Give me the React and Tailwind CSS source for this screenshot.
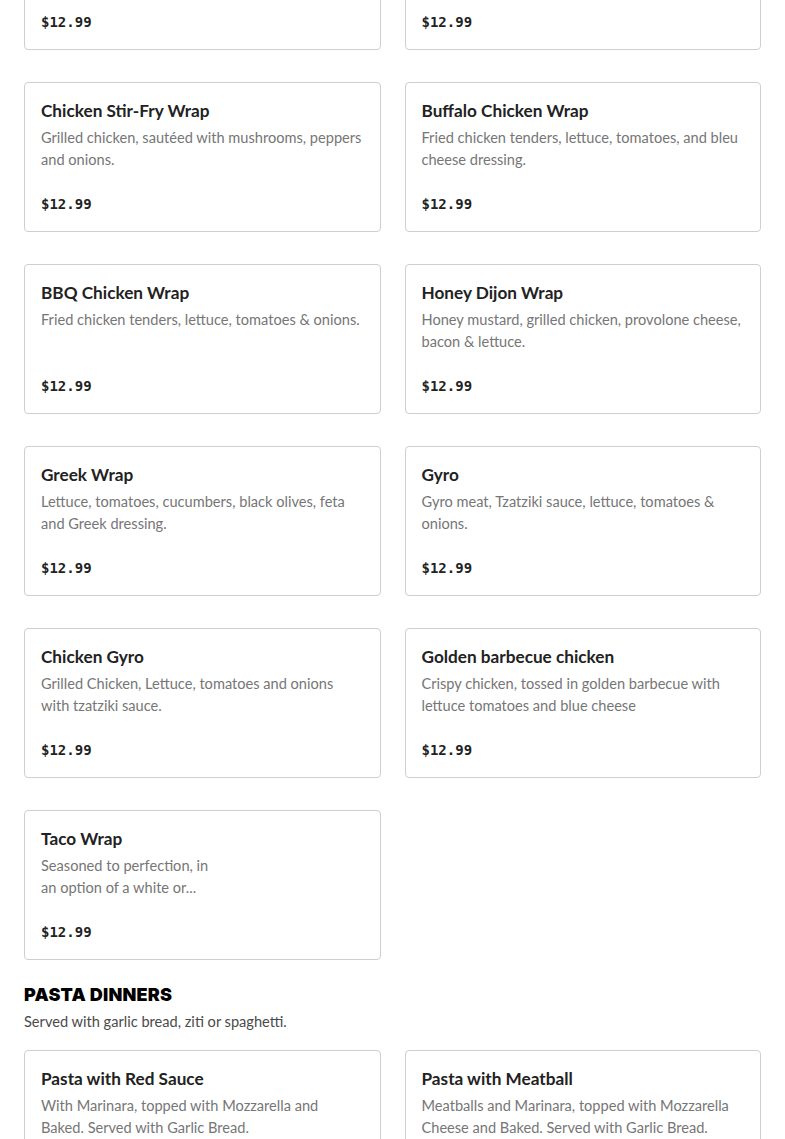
import React from "react";

const wraps = [
  { t: "Chicken Caesar Wrap", d: "Grilled chicken, romaine lettuce, parmesan cheese and Caesar dressing." },
  { t: "Chicken Bacon Ranch Wrap", d: "Grilled chicken, bacon, lettuce, tomatoes and ranch dressing." },
  { t: "Chicken Stir-Fry Wrap", d: "Grilled chicken, sautéed with mushrooms, peppers and onions." },
  { t: "Buffalo Chicken Wrap", d: "Fried chicken tenders, lettuce, tomatoes, and bleu cheese dressing." },
  { t: "BBQ Chicken Wrap", d: "Fried chicken tenders, lettuce, tomatoes & onions." },
  { t: "Honey Dijon Wrap", d: "Honey mustard, grilled chicken, provolone cheese, bacon & lettuce." },
  { t: "Greek Wrap", d: "Lettuce, tomatoes, cucumbers, black olives, feta and Greek dressing." },
  { t: "Gyro", d: "Gyro meat, Tzatziki sauce, lettuce, tomatoes & onions." },
  { t: "Chicken Gyro", d: "Grilled Chicken, Lettuce, tomatoes and onions with tzatziki sauce." },
  { t: "Golden barbecue chicken", d: "Crispy chicken, tossed in golden barbecue with lettuce tomatoes and blue cheese" },
  { t: "Taco Wrap", d: "Seasoned to perfection, in\nan option of a white or..." },
];

const pasta = [
  { t: "Pasta with Red Sauce", d: "With Marinara, topped with Mozzarella and Baked. Served with Garlic Bread." },
  { t: "Pasta with Meatball", d: "Meatballs and Marinara, topped with Mozzarella Cheese and Baked. Served with Garlic Bread." },
];

const sans = { fontFamily: "Lato, 'Open Sans', sans-serif" };

function Card({ t, d }) {
  return (
    <div className="flex flex-col rounded-[4px] border border-[#cfcfcf] bg-white px-4 pt-4 pb-[17px]">
      <div className="text-[17.2px] leading-6 font-bold text-[#222222]">{t}</div>
      <div className="mt-[4px] min-h-[44px] whitespace-pre-line text-[14.6px] leading-[22px] text-[#767676]">{d}</div>
      <div className="mt-auto pt-[23px] text-[14px] leading-5 font-bold text-[#222222] [font-family:'DejaVu_Sans_Mono',monospace]">
        $12.99
      </div>
    </div>
  );
}

export default function App() {
  return (
    <div className="min-h-[1139px] w-full overflow-hidden bg-white px-6" style={sans}>
      <div className="mt-[-100px] grid grid-cols-2 gap-x-6 gap-y-8">
        {wraps.map((w) => (
          <Card key={w.t} {...w} />
        ))}
      </div>
      <h2 className="mt-[23px] text-[18px] leading-6 font-black tracking-[0.2px] text-black uppercase [font-family:Inter,sans-serif]">
        Pasta Dinners
      </h2>
      <p className="mt-1 text-[14.6px] leading-[22px] text-[#4a4a4a]">Served with garlic bread, ziti or spaghetti.</p>
      <div className="mt-[17px] grid grid-cols-2 gap-x-6 gap-y-8">
        {pasta.map((w) => (
          <Card key={w.t} {...w} />
        ))}
      </div>
    </div>
  );
}
